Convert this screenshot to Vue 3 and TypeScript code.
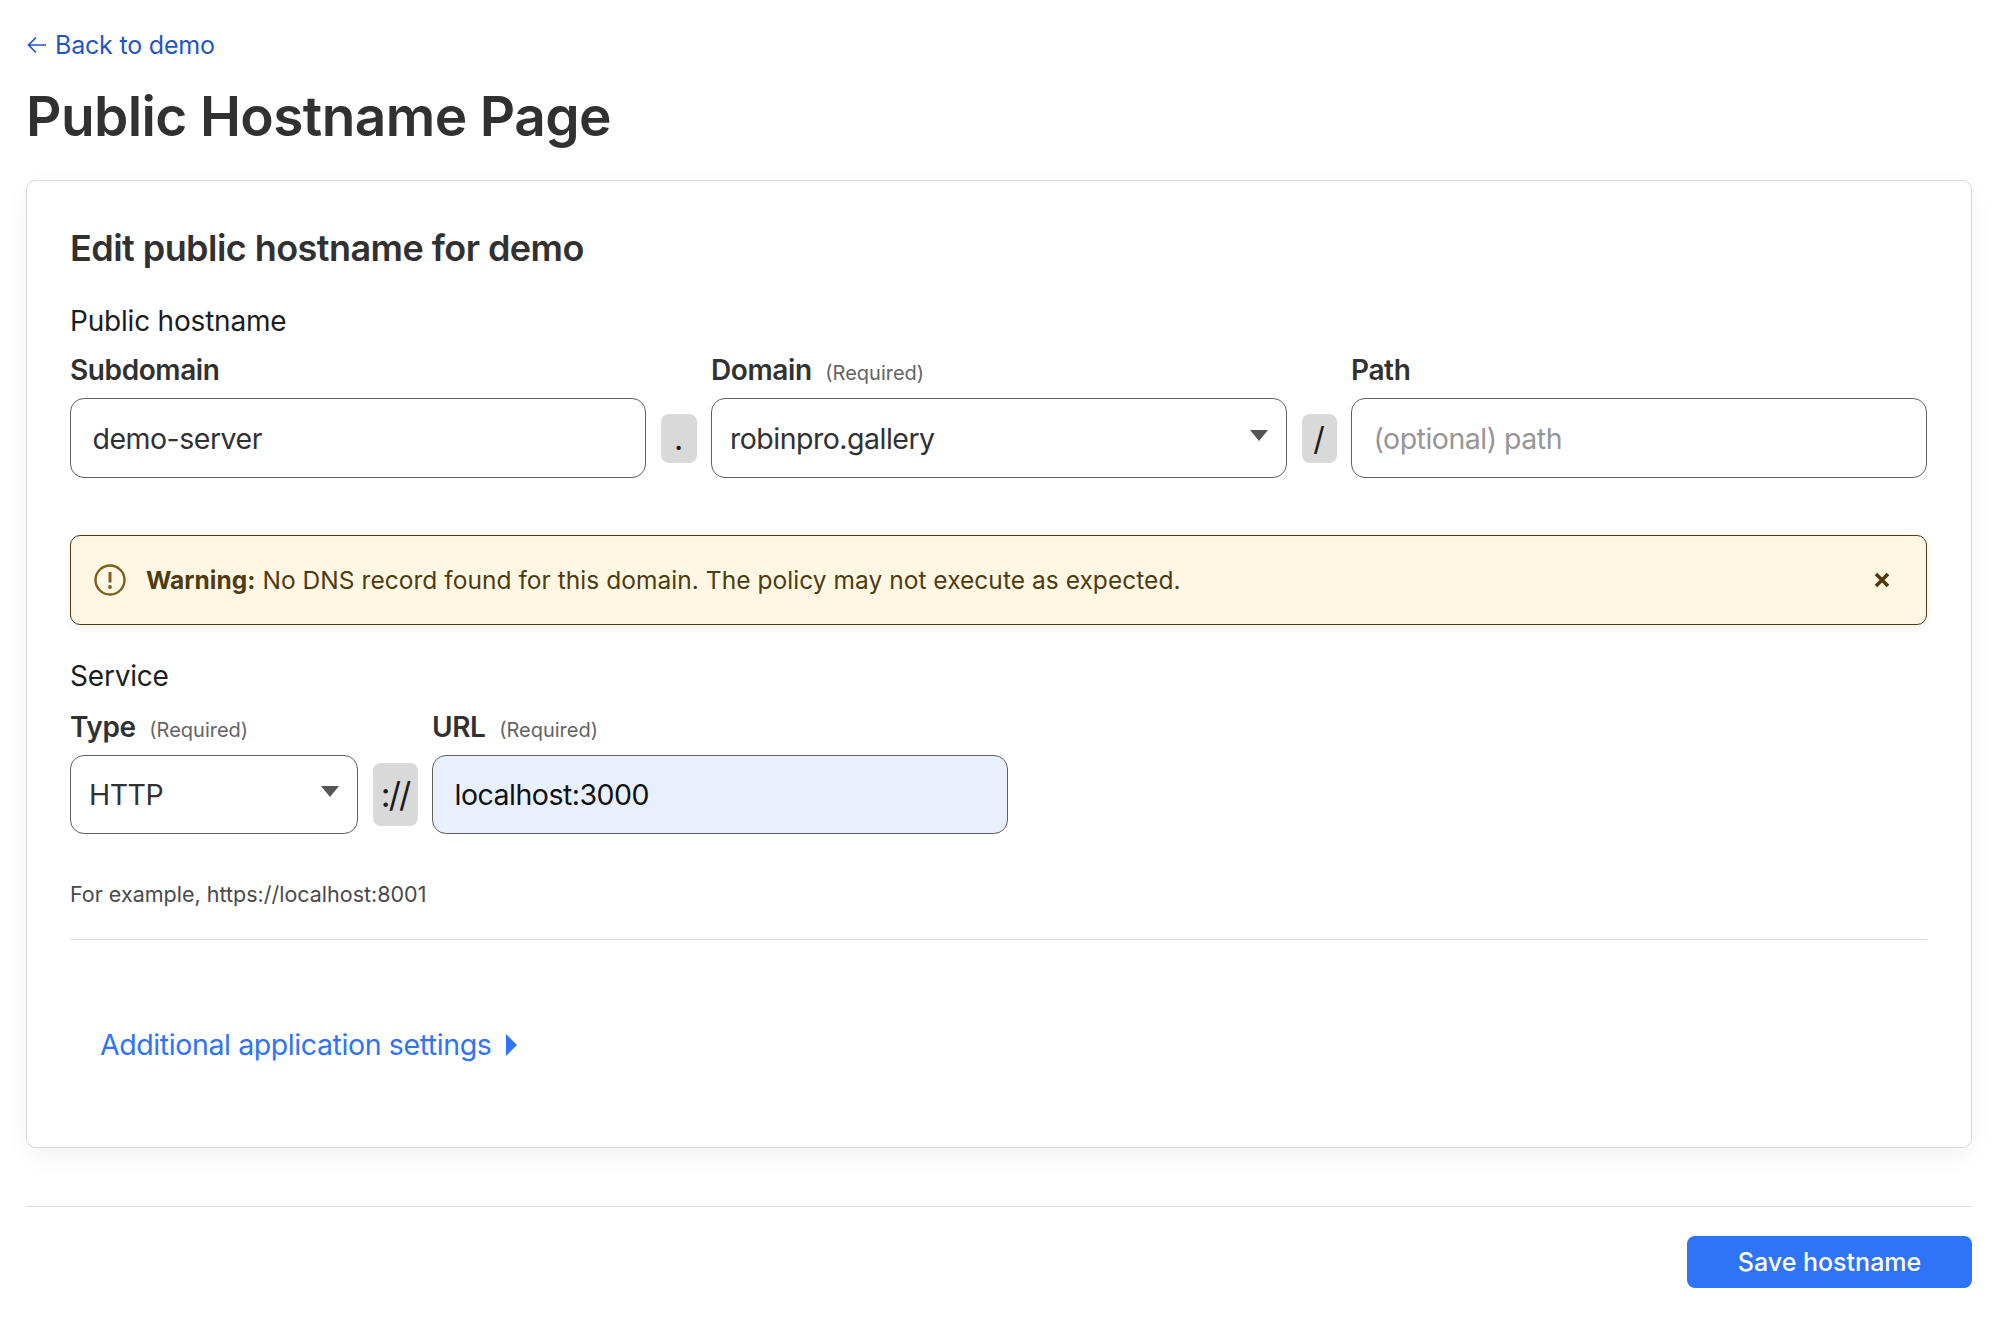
<template>
  <div class="page">
    <a class="back-link" href="#">
      <svg class="back-arrow" viewBox="0 0 20 20" fill="none" stroke="currentColor" stroke-width="1.7">
        <path d="M19 10H1.5M9 2.5 1.5 10 9 17.5" />
      </svg>
      <span>Back to demo</span>
    </a>
    <h1 class="page-title">Public Hostname Page</h1>

    <section class="card">
      <h2 class="card-title">Edit public hostname for demo</h2>

      <div class="group-label">Public hostname</div>
      <div class="host-row">
        <div class="field">
          <label class="field-label">Subdomain</label>
          <input class="text-input" type="text" value="demo-server" />
        </div>
        <span class="addon addon-dot">.</span>
        <div class="field">
          <label class="field-label">Domain <small>(Required)</small></label>
          <div class="select-box">
            <span>robinpro.gallery</span>
            <i class="caret" />
          </div>
        </div>
        <span class="addon addon-slash">/</span>
        <div class="field">
          <label class="field-label">Path</label>
          <input class="text-input" type="text" placeholder="(optional) path" />
        </div>
      </div>

      <div class="warning">
        <svg class="warning-icon" viewBox="0 0 32 32" fill="none">
          <circle cx="16" cy="16" r="14.5" stroke="#7d5e1c" stroke-width="2.4" />
          <path d="M16 8v10.5" stroke="#7d5e1c" stroke-width="3" />
          <circle cx="16" cy="23" r="1.9" fill="#7d5e1c" />
        </svg>
        <p class="warning-text"><strong>Warning:</strong> No DNS record found for this domain. The policy may not execute as expected.</p>
        <svg class="warning-close" viewBox="0 0 16 16" fill="none" stroke="#4f3a0e" stroke-width="3.6">
          <path d="M2 2l12 12M14 2 2 14" />
        </svg>
      </div>

      <div class="group-label service-label">Service</div>
      <div class="service-row">
        <div class="field">
          <label class="field-label">Type <small>(Required)</small></label>
          <div class="select-box type-select">
            <span>HTTP</span>
            <i class="caret" />
          </div>
        </div>
        <span class="addon addon-scheme">://</span>
        <div class="field">
          <label class="field-label">URL <small>(Required)</small></label>
          <input class="text-input url-input" type="text" value="localhost:3000" />
        </div>
      </div>
      <p class="hint">For example, https://localhost:8001</p>

      <hr class="card-divider" />

      <a class="settings-link" href="#">
        <span>Additional application settings</span>
        <svg class="settings-arrow" viewBox="0 0 11 22"><path d="M0 0l11 11L0 22z" fill="currentColor" /></svg>
      </a>
    </section>

    <footer class="footer">
      <button class="save-btn" type="button">Save hostname</button>
    </footer>
  </div>
</template>

<script setup lang="ts">
</script>

<style scoped>
.page {
  box-sizing: border-box;
  width: 2004px;
  padding: 27px 32px 40px 26px;
  font-family: Inter, "Liberation Sans", sans-serif;
  color: #313131;
}

.back-link {
  display: flex;
  align-items: center;
  gap: 8px;
  height: 36px;
  color: #1f56c4;
  font-size: 25px;
  letter-spacing: -0.2px;
  text-decoration: none;
}
.back-arrow { width: 20px; height: 20px; margin-left: 1px; }

.page-title {
  margin: 17px 0 0;
  font-size: 55px;
  line-height: 72px;
  font-weight: 600;
  letter-spacing: -0.6px;
}

.card {
  box-sizing: border-box;
  height: 968px;
  margin-top: 28px;
  padding: 44px 44px 0 43px;
  background: #fff;
  border: 1px solid #d9d9d9;
  border-radius: 10px;
  box-shadow: 0 8px 24px rgba(0, 0, 0, 0.05);
}

.card-title {
  margin: 0;
  font-size: 36px;
  line-height: 46px;
  font-weight: 600;
  letter-spacing: -0.55px;
}

.group-label {
  margin-top: 32px;
  font-size: 28px;
  line-height: 36px;
  letter-spacing: -0.2px;
  color: #1d1d1d;
}

.host-row {
  display: grid;
  grid-template-columns: 576px 36px 576px 35px 1fr;
  column-gap: 14.5px;
  margin-top: 13px;
  align-items: end;
}

.service-row {
  display: grid;
  grid-template-columns: 288px 45px 576px;
  column-gap: 14.5px;
  margin-top: 14.5px;
  align-items: end;
}

.field { display: flex; flex-direction: column; }

.field-label {
  height: 36px;
  margin-bottom: 10px;
  font-size: 28px;
  line-height: 36px;
  font-weight: 600;
  letter-spacing: -0.4px;
}
.field-label small {
  margin-left: 7px;
  font-size: 20px;
  font-weight: 400;
  letter-spacing: 0;
  color: #646464;
}

.text-input,
.select-box {
  box-sizing: border-box;
  width: 100%;
  height: 80px;
  border: 1.5px solid #5f5f5f;
  border-radius: 14px;
  background: #fff;
  font-family: inherit;
  font-size: 28.5px;
  letter-spacing: -0.5px;
  color: #313131;
}
.text-input { padding: 0 21.5px; outline: none; }
.text-input::placeholder { color: #969696; opacity: 1; }

.select-box {
  display: flex;
  align-items: center;
  justify-content: space-between;
  padding: 0 18px;
}
.caret {
  width: 0;
  height: 0;
  margin-bottom: 5px;
  border-left: 9px solid transparent;
  border-right: 9px solid transparent;
  border-top: 11px solid #555;
}

.addon {
  display: flex;
  align-items: center;
  justify-content: center;
  height: 49px;
  margin-bottom: 15.5px;
  background: #d9d9d9;
  border-radius: 8px;
  font-size: 32px;
  color: #1d1d1d;
}
.addon-scheme { height: 63px; margin-bottom: 8px; font-size: 34px; letter-spacing: -2px; }

.type-select { height: 79px; }
.url-input { height: 79px; background: #e8f0fe; color: #111; }

.warning {
  box-sizing: border-box;
  display: flex;
  align-items: center;
  height: 90px;
  margin-top: 57px;
  padding: 0 36px 0 23px;
  background: #fef7e4;
  border: 1.5px solid #4f3a0e;
  border-radius: 10px;
  box-shadow: 0 4px 8px rgba(0, 0, 0, 0.05);
  color: #4f3b10;
}
.warning-icon { width: 32px; height: 32px; flex: none; }
.warning-text {
  flex: 1;
  margin: 0 0 0 20px;
  font-size: 24.5px;
  letter-spacing: 0.04px;
}
.warning-text strong { font-weight: 700; }
.warning-close { width: 16px; height: 16px; flex: none; }

.service-label { margin-top: 33px; }

.hint {
  margin: 45px 0 0;
  font-size: 21.5px;
  line-height: 30px;
  color: #4a4a4a;
}

.card-divider {
  margin: 30px 0 0;
  border: none;
  border-top: 1.5px solid #d9d9d9;
}

.settings-link {
  display: flex;
  align-items: center;
  gap: 15px;
  margin: 87px 0 0 30px;
  color: #2f73f6;
  font-size: 28.5px;
  letter-spacing: -0.4px;
  line-height: 36px;
  text-decoration: none;
}
.settings-arrow { width: 11px; height: 22px; }

.footer {
  display: flex;
  justify-content: flex-end;
  margin-top: 58px;
  padding-top: 29px;
  border-top: 1.5px solid #d9d9d9;
}
.save-btn {
  width: 285px;
  height: 52px;
  border: none;
  border-radius: 8px;
  background: #2f73f6;
  color: #fff;
  font-family: inherit;
  font-size: 25px;
  font-weight: 500;
}
</style>
